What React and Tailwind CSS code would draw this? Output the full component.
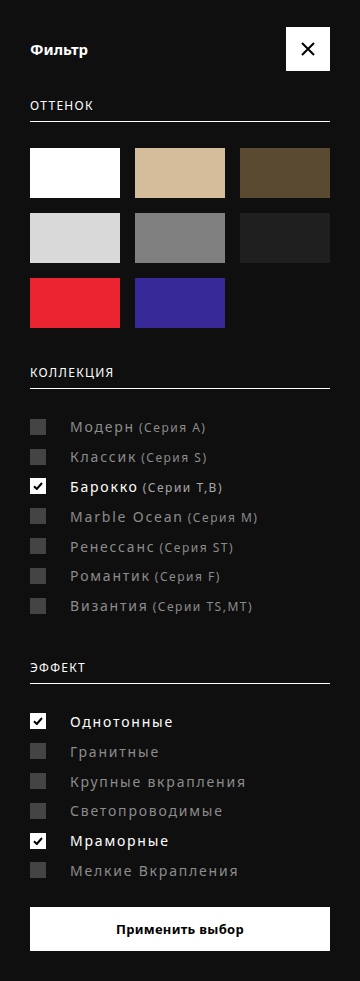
import React, { useState } from 'react';

const font = { fontFamily: '"Noto Sans", "Liberation Sans", sans-serif' };

const colors = ['#ffffff', '#d5bd9c', '#5a4a31', '#d9d9d9', '#808080', '#1f1f1f', '#eb222f', '#372a98'];

const collections = [
    ['Модерн', '(Серия A)', false],
    ['Классик', '(Серия S)', false],
    ['Барокко', '(Серии T,B)', true],
    ['Marble Ocean', '(Серия M)', false],
    ['Ренессанс', '(Серия ST)', false],
    ['Романтик', '(Серия F)', false],
    ['Византия', '(Серии TS,MT)', false],
];

const effects = [
    ['Однотонные', true],
    ['Гранитные', false],
    ['Крупные вкрапления', false],
    ['Светопроводимые', false],
    ['Мраморные', true],
    ['Мелкие Вкрапления', false],
];

const SectionTitle = ({ children }) => (
    <div className="border-b border-white pb-[7px] text-[12px] leading-[16px] tracking-[1.3px] text-white">
        {children}
    </div>
);

const Check = ({ checked, label, sub }) => (
    <div className="flex items-center h-[29.8px]">
        <div className={`w-4 h-4 flex items-center justify-center shrink-0 ${checked ? 'bg-white' : 'bg-[#444444]'}`}>
            {checked && (
                <svg width="10" height="8" viewBox="0 0 10 8">
                    <path d="M1 4.2 L3.8 7 L9 1" stroke="#000" strokeWidth="2" fill="none" />
                </svg>
            )}
        </div>
        <span className={`ml-6 text-[14px] tracking-[1.8px] whitespace-nowrap ${checked ? 'text-white' : 'text-[#8c8c8c]'}`}>
            {label}
            {sub && (
                <span className={`text-[12px] tracking-[1.5px] ml-[4px] ${checked ? 'text-[#a8a8a8]' : ''}`}>{sub}</span>
            )}
        </span>
    </div>
);

const App = () => {
    const [open] = useState(true);
    return (
        <div className="min-h-[981px] w-[360px] bg-[#0f0f0f] px-[30px] pt-[27px]" style={font}>
            <div className="flex items-center justify-between">
                <h2 className="text-[15px] font-bold text-white">Фильтр</h2>
                <button className="w-11 h-11 bg-white flex items-center justify-center">
                    <svg width="14" height="14" viewBox="0 0 14 14">
                        <path d="M1 1 L13 13 M13 1 L1 13" stroke="#000" strokeWidth="2" />
                    </svg>
                </button>
            </div>

            <div className="mt-[27px]">
                <SectionTitle>ОТТЕНОК</SectionTitle>
            </div>
            <div className="grid grid-cols-3 gap-[15px] mt-[26px]">
                {colors.map((c) => (
                    <div key={c} className="h-[50px]" style={{ backgroundColor: c }} />
                ))}
            </div>

            <div className="mt-[37px]">
                <SectionTitle>КОЛЛЕКЦИЯ</SectionTitle>
            </div>
            <div className="mt-[23px]">
                {collections.map(([l, s, c]) => (
                    <Check key={l} label={l} sub={s} checked={c} />
                ))}
            </div>

            <div className="mt-[39px]">
                <SectionTitle>ЭФФЕКТ</SectionTitle>
            </div>
            <div className="mt-[23px]">
                {effects.map(([l, c]) => (
                    <Check key={l} label={l} checked={c} />
                ))}
            </div>

            <button className="mt-[22px] w-full h-11 bg-white text-black text-[13px] tracking-[0.3px] font-bold">
                Применить выбор
            </button>
        </div>
    );
};

export default App;
